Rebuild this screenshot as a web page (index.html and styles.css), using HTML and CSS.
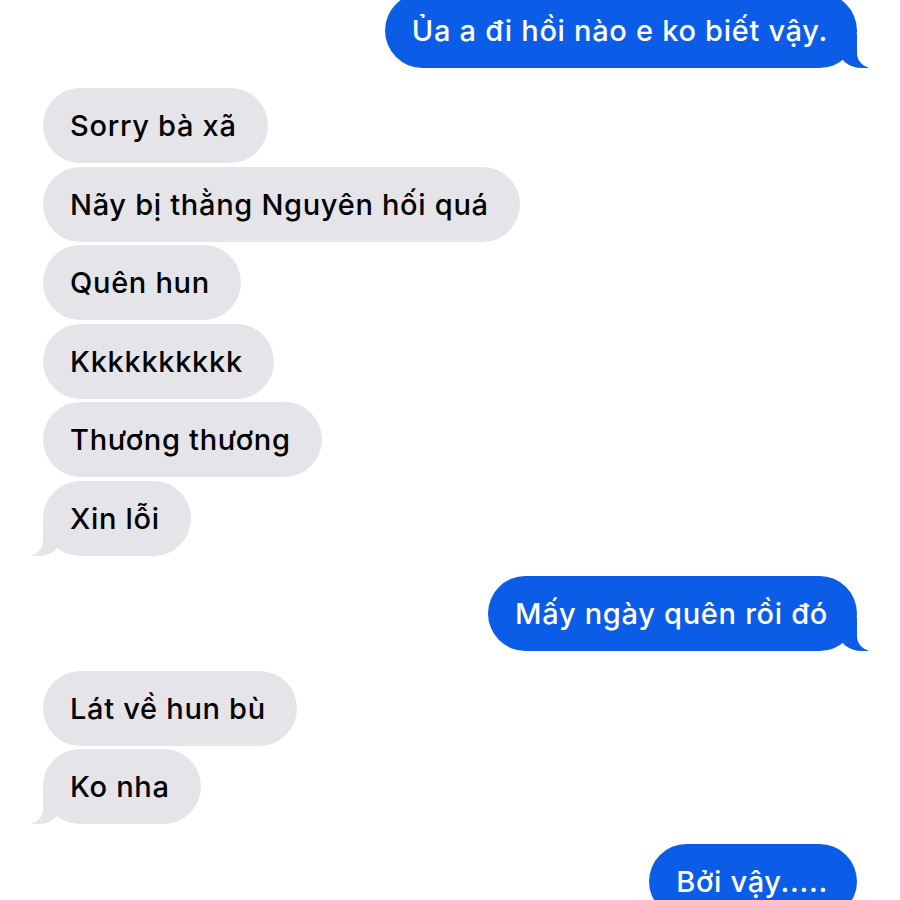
FILE: index.html
```html
<!DOCTYPE html>
<html lang="vi">
<head>
<meta charset="utf-8">
<title>Messages</title>
<link rel="stylesheet" href="styles.css">
</head>
<body>
<div class="thread">
  <div class="group sent">
    <div class="bubble out tail first">Ủa a đi hồi nào e ko biết vậy.</div>
  </div>
  <div class="group received">
    <div class="bubble in">Sorry bà xã</div>
    <div class="bubble in">Nãy bị thằng Nguyên hối quá</div>
    <div class="bubble in">Quên hun</div>
    <div class="bubble in">Kkkkkkkkkk</div>
    <div class="bubble in">Thương thương</div>
    <div class="bubble in tail">Xin lỗi</div>
  </div>
  <div class="group sent">
    <div class="bubble out tail">Mấy ngày quên rồi đó</div>
  </div>
  <div class="group received">
    <div class="bubble in">Lát về hun bù</div>
    <div class="bubble in tail">Ko nha</div>
  </div>
  <div class="group sent">
    <div class="bubble out">Bởi vậy.....</div>
  </div>
</div>
</body>
</html>
```

FILE: styles.css
```css
html, body {
  margin: 0;
  padding: 0;
  background: #ffffff;
  overflow: hidden;
}

.thread {
  display: flex;
  flex-direction: column;
  gap: 20px;
  padding: 0 43px;
  font-family: Inter, "Noto Sans", sans-serif;
  font-size: 29px;
  font-weight: 500;
  letter-spacing: 0.7px;
}

.group {
  display: flex;
  flex-direction: column;
  gap: 3.5px;
}

.group.sent {
  align-items: flex-end;
}

.group.received {
  align-items: flex-start;
}

.bubble {
  position: relative;
  line-height: 37px;
  padding: 19px 31px 19px 27px;
  border-radius: 38px;
  white-space: nowrap;
}

.bubble.out {
  padding-right: 29px;
}

.bubble.first {
  margin-top: -7px;
}

.bubble.in {
  background: #e4e4e9;
  color: #000000;
}

.bubble.out {
  background: #0b5ce7;
  color: #ffffff;
}

.bubble.tail::before,
.bubble.tail::after {
  content: "";
  position: absolute;
  bottom: 0;
  height: 34px;
}

.bubble.out.tail::before {
  right: -11px;
  width: 30px;
  background: #0b5ce7;
  border-bottom-left-radius: 24px 20px;
}

.bubble.out.tail::after {
  right: -40px;
  width: 40px;
  background: #ffffff;
  border-bottom-left-radius: 15px;
}

.bubble.in.tail::before {
  left: -11px;
  width: 30px;
  background: #e4e4e9;
  border-bottom-right-radius: 24px 20px;
}

.bubble.in.tail::after {
  left: -40px;
  width: 40px;
  background: #ffffff;
  border-bottom-right-radius: 15px;
}
```
